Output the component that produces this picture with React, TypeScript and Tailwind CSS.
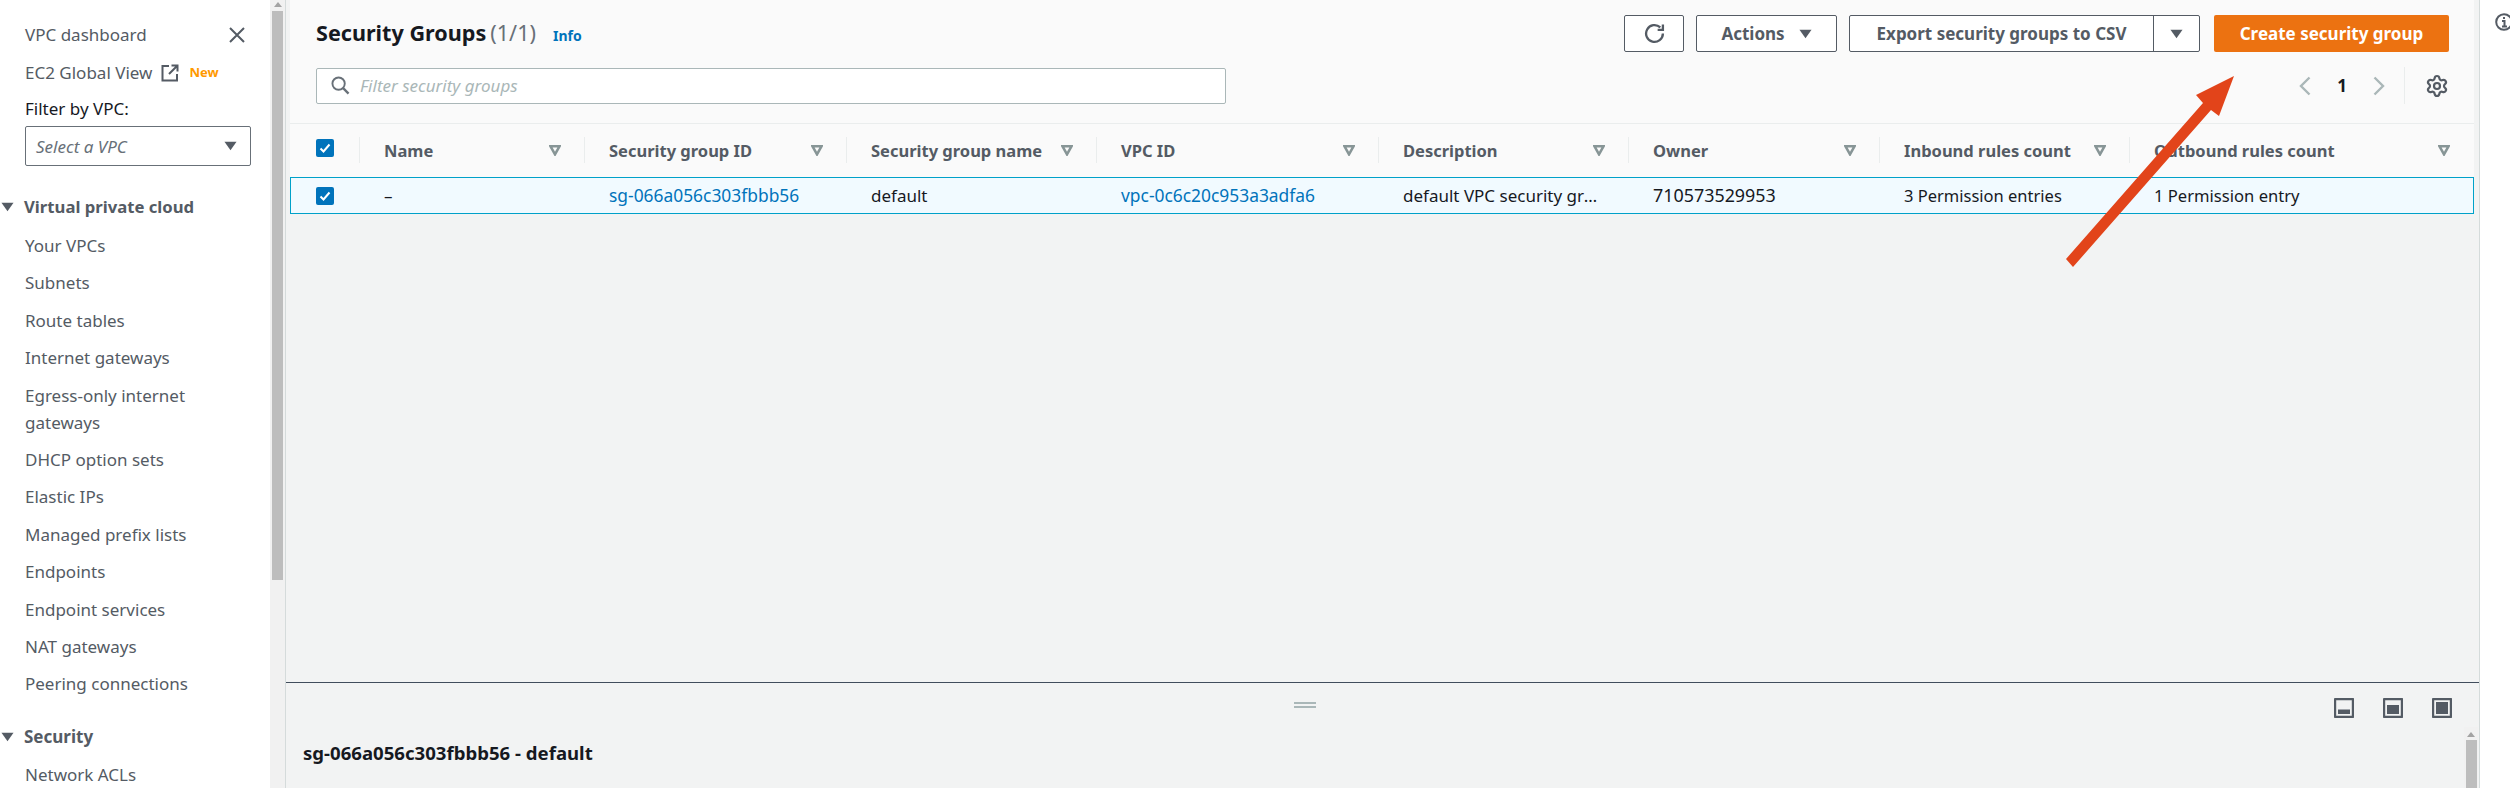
import { Settings } from "lucide-react";

const font = { fontFamily: '"Noto Sans", sans-serif' };

const navOne = ["Your VPCs", "Subnets", "Route tables", "Internet gateways", "Egress-only internet gateways", "DHCP option sets", "Elastic IPs", "Managed prefix lists", "Endpoints", "Endpoint services", "NAT gateways", "Peering connections"];

const columns = ["Security group ID", "Security group name", "VPC ID", "Description", "Owner", "Inbound rules count", "Outbound rules count"];

function Caret({ className }: { className?: string }) {
  return (
    <svg viewBox="0 0 14 10" className={className}>
      <path d="M0.5 0.5H13.5L7 9.5Z" fill="currentColor" />
    </svg>
  );
}

function SortIcon() {
  return (
    <svg viewBox="0 0 12 11" className="w-3 h-[11px] text-[#879596] shrink-0">
      <path d="M1.5 1.3H10.5L6 9.3Z" fill="none" stroke="currentColor" strokeWidth="2.6" />
    </svg>
  );
}

function Check() {
  return (
    <div className="w-[18px] h-[18px] rounded-[2px] bg-[#0073bb] flex items-center justify-center">
      <svg viewBox="0 0 14 14" className="w-[14px] h-[14px]">
        <path d="M2.5 7.5L5.5 10.5L11.5 3.5" fill="none" stroke="white" strokeWidth="2" />
      </svg>
    </div>
  );
}

function HeadCell({ label }: { label: string }) {
  return (
    <div className="relative flex items-center justify-between pl-[25px] pr-[23px] h-full">
      <span className="font-bold text-[16.5px] text-[#545b64] whitespace-nowrap">{label}</span>
      <SortIcon />
      <div className="absolute left-0 top-[13px] bottom-[14px] w-px bg-[#eaeded]" />
    </div>
  );
}

function PanelIcon({ inner }: { inner: string }) {
  return (
    <svg viewBox="0 0 20 20" className="w-5 h-5">
      <rect x="1" y="1" width="18" height="18" rx="0.5" fill="none" stroke="#545b64" strokeWidth="2.4" />
      <path d={inner} fill="#545b64" />
    </svg>
  );
}

export default function App() {
  return (
    <div style={font} className="relative flex h-[788px] w-[2510px] overflow-hidden bg-white text-[17px] leading-[27px] text-[#545b64]">
      <aside className="w-[270px] shrink-0 h-full overflow-hidden">
        <div className="pl-[25px] pr-[19px] pt-[21px]">
          <div className="flex items-center justify-between h-[27px]">
            <span>VPC dashboard</span>
            <svg viewBox="0 0 16 16" className="w-4 h-4 mr-[6px]">
              <path d="M1 1L15 15M15 1L1 15" stroke="#545b64" strokeWidth="2" />
            </svg>
          </div>
          <div className="flex items-center h-[27px] mt-[11px]">
            <span>EC2 Global View</span>
            <svg viewBox="0 0 18 18" className="w-[18px] h-[18px] ml-[9px]">
              <path d="M8 2H1.5V16.5H16V10M10.5 1.5H16.5V7.5M16 2L8 10" fill="none" stroke="#545b64" strokeWidth="2" />
            </svg>
            <span className="ml-[10px] text-[13px] font-bold text-[#ff9900]">New</span>
          </div>
          <div className="h-[27px] mt-[9px] text-[#16191f]">Filter by VPC:</div>
          <div className="h-10 mt-[4px] border border-[#687078] rounded-[2px] flex items-center justify-between pl-[10px] pr-[13px]">
            <span className="italic text-[#687078]">Select a VPC</span>
            <Caret className="w-[13px] h-[10px]" />
          </div>
        </div>
        <div className="mt-[27px] flex items-center h-[27px]">
          <Caret className="w-[13px] h-[10px] ml-[1px]" />
          <span className="ml-[10px] font-bold text-[16.7px]">Virtual private cloud</span>
        </div>
        <ul className="pl-[25px] pr-[24px] pt-[12px] flex flex-col gap-[10.4px]">
          {navOne.map((item) => (
            <li key={item}>{item}</li>
          ))}
        </ul>
        <div className="mt-[26px] flex items-center h-[27px]">
          <Caret className="w-[13px] h-[10px] ml-[1px]" />
          <span className="ml-[10px] font-bold">Security</span>
        </div>
        <div className="pl-[25px] mt-[11px]">Network ACLs</div>
      </aside>

      <div className="w-[15px] shrink-0 bg-[#f1f1f1] flex flex-col items-center">
        <svg viewBox="0 0 8 5" className="w-2 h-[5px] mt-[2px] mb-[4px]">
          <path d="M0 5L4 0L8 5Z" fill="#a3a3a3" />
        </svg>
        <div className="w-[11px] h-[569px] bg-[#bdbdbd]" />
      </div>

      <main className="flex-1 min-w-0 h-full flex flex-col bg-[#f2f3f3] border-x border-[#d5dbdb]">
        <div className="flex-1 min-h-0 pl-[4px] pr-[5px]">
          <div className="h-[124px] bg-[#fafafa] border-b border-[#eaeded] pl-[26px] pr-[25px] flex flex-col">
            <div className="flex items-center justify-between pt-[15px]">
              <div className="flex items-baseline">
                <span className="text-[21.6px] font-bold text-[#16191f]">Security Groups</span>
                <span className="ml-[4px] text-[21.6px] text-[#687078]">(1/1)</span>
                <span className="ml-[17px] text-[14px] font-bold text-[#0073bb]">Info</span>
              </div>
              <div className="flex items-center font-bold">
                <button className="w-[60px] h-[37px] border border-[#545b64] rounded-[2px] bg-white flex items-center justify-center">
                  <svg viewBox="0 0 20 20" className="w-[21px] h-[21px]">
                    <path d="M15.5 4.2A8 8 0 1 0 18 10" fill="none" stroke="#545b64" strokeWidth="2.2" />
                    <path d="M18 1.5V6.5H13" fill="none" stroke="#545b64" strokeWidth="2.2" />
                  </svg>
                </button>
                <button className="ml-3 w-[141px] h-[37px] border border-[#545b64] rounded-[2px] bg-white flex items-center justify-center gap-[14px]">
                  <span>Actions</span>
                  <Caret className="w-[13px] h-[10px]" />
                </button>
                <div className="ml-3 w-[351px] h-[37px] border border-[#545b64] rounded-[2px] bg-white flex">
                  <span className="flex-1 flex items-center justify-center">Export security groups to CSV</span>
                  <span className="w-[46px] border-l border-[#545b64] flex items-center justify-center">
                    <Caret className="w-[13px] h-[10px]" />
                  </span>
                </div>
                <button className="ml-[14px] w-[235px] h-[37px] rounded-[2px] bg-[#ec7211] text-white">Create security group</button>
              </div>
            </div>
            <div className="flex items-center justify-between mt-[15px]">
              <div className="w-[910px] h-[36px] border border-[#aab7b8] rounded-[2px] bg-white flex items-center pl-[14px]">
                <svg viewBox="0 0 20 20" className="w-[19px] h-[19px]">
                  <circle cx="8" cy="8" r="6.5" fill="none" stroke="#687078" strokeWidth="2" />
                  <path d="M12.5 12.5L18.5 18.5" stroke="#687078" strokeWidth="2.4" />
                </svg>
                <span className="ml-[10px] italic text-[#aab7b8]">Filter security groups</span>
              </div>
              <div className="flex items-center h-[37px]">
                <svg viewBox="0 0 12 20" className="w-3 h-5">
                  <path d="M10.5 1.5L2 10L10.5 18.5" fill="none" stroke="#aab7b8" strokeWidth="2.4" />
                </svg>
                <span className="w-[62px] text-center font-bold text-[#16191f]">1</span>
                <svg viewBox="0 0 12 20" className="w-3 h-5">
                  <path d="M1.5 1.5L10 10L1.5 18.5" fill="none" stroke="#aab7b8" strokeWidth="2.4" />
                </svg>
                <div className="ml-[19px] w-px h-[37px] bg-[#eaeded]" />
                <Settings className="ml-[20px] w-6 h-6 text-[#545b64]" strokeWidth={2.2} />
              </div>
            </div>
          </div>

          <div className="h-[53px] bg-[#fafafa] grid grid-cols-[69px_225px_262px_250px_282px_250px_251px_250px_344px]">
            <div className="flex items-center pl-[26px] pb-[5px]">
              <Check />
            </div>
            <HeadCell label="Name" />
            {columns.map((c) => (
              <HeadCell key={c} label={c} />
            ))}
          </div>

          <div className="h-[37px] bg-[#f1faff] border border-[#00a1c9] text-[#16191f] grid grid-cols-[68px_225px_262px_250px_282px_250px_251px_250px_342px] items-center">
            <div className="flex items-center pl-[25px]">
              <Check />
            </div>
            <div className="pl-[25px]">–</div>
            <div className="pl-[25px] text-[17.4px] text-[#0073bb]">sg-066a056c303fbbb56</div>
            <div className="pl-[25px]">default</div>
            <div className="pl-[25px] text-[17.4px] text-[#0073bb]">vpc-0c6c20c953a3adfa6</div>
            <div className="pl-[25px] pr-[25px] truncate">default VPC security group</div>
            <div className="pl-[25px] text-[17.9px]">710573529953</div>
            <div className="pl-[25px] text-[16.5px]">3 Permission entries</div>
            <div className="pl-[25px] text-[16.6px]">1 Permission entry</div>
          </div>
        </div>

        <div className="relative h-[106px] shrink-0 border-t border-[#414d5c]">
          <div className="absolute left-[1008px] top-[19px] w-[22px] h-[6px] border-y-2 border-[#aab7b8]" />
          <div className="flex justify-end gap-[29px] pt-[15px] pr-[27px]">
            <PanelIcon inner="M4 11.5H16V16H4Z" />
            <PanelIcon inner="M4 7H16V16H4Z" />
            <PanelIcon inner="M4 4H16V16H4Z" />
          </div>
          <div className="absolute left-[17px] top-[56px] font-bold text-[18.6px] text-[#16191f]">sg-066a056c303fbbb56 - default</div>
          <div className="absolute right-[1px] top-[44px] bottom-0 w-[14px] bg-[#f1f1f1] flex flex-col items-center">
            <svg viewBox="0 0 8 5" className="w-2 h-[5px] mt-[5px] mb-[3px]">
              <path d="M0 5L4 0L8 5Z" fill="#a3a3a3" />
            </svg>
            <div className="w-[11px] flex-1 bg-[#bdbdbd]" />
          </div>
        </div>
      </main>

      <div className="w-[30px] shrink-0 overflow-hidden pl-[15px] pt-[13px]">
        <svg viewBox="0 0 18 18" className="w-[18px] h-[18px] shrink-0 block">
          <circle cx="9" cy="9" r="7.8" fill="none" stroke="#545b64" strokeWidth="2" />
          <path d="M9 4V6M7 8H9.5V13M7 13.5H12" fill="none" stroke="#545b64" strokeWidth="2" />
        </svg>
      </div>

      {/* annotation arrow drawn over the screenshot */}
      <svg className="absolute inset-0 pointer-events-none" width="2510" height="788" viewBox="0 0 2510 788">
        <polygon points="2234,76 2196,95 2203,103 2066,259 2073,267 2211,110 2219,116" fill="#e2441a" />
      </svg>
    </div>
  );
}
